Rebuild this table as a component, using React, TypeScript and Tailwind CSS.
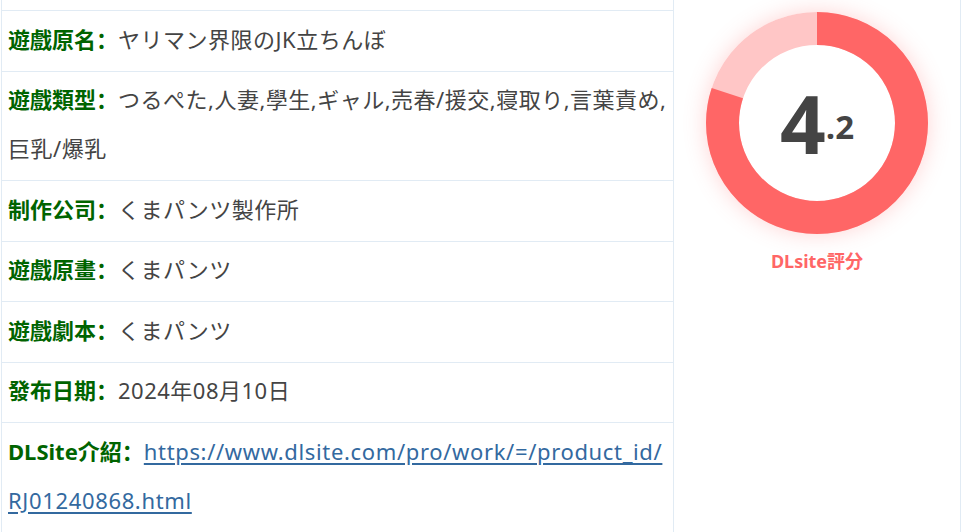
import React from 'react'

const rows: { label: string; value: React.ReactNode }[] = [
  { label: '遊戲原名', value: 'ヤリマン界限のJK立ちんぼ' },
  { label: '遊戲類型', value: 'つるぺた,人妻,學生,ギャル,売春/援交,寝取り,言葉責め,巨乳/爆乳' },
  { label: '制作公司', value: 'くまパンツ製作所' },
  { label: '遊戲原畫', value: 'くまパンツ' },
  { label: '遊戲劇本', value: 'くまパンツ' },
  { label: '發布日期', value: '2024年08月10日' },
  {
    label: 'DLSite介紹',
    value: (
      <a href="#" className="text-[#33699f] underline underline-offset-[3px] tracking-[0.65px]">
        https://www.dlsite.com/pro/work/=/product_id/<wbr />RJ01240868.html
      </a>
    ),
  },
]

function ScoreRing({ percent }: { percent: number }) {
  const r = 94.5
  const c = 2 * Math.PI * r
  return (
    <div className="relative w-[222px] h-[222px] rounded-full shadow-[0_0_22px_rgba(255,102,102,0.28)]">
      <svg width="222" height="222" viewBox="0 0 222 222" className="absolute inset-0">
        <circle cx="111" cy="111" r={r} fill="none" stroke="#ffc6c6" strokeWidth="33" />
        <circle
          cx="111"
          cy="111"
          r={r}
          fill="none"
          stroke="#ff6666"
          strokeWidth="33"
          strokeDasharray={`${c * percent} ${c}`}
          transform="rotate(-90 111 111)"
        />
      </svg>
      <div className="absolute inset-0 flex items-center justify-center font-['Open_Sans',sans-serif] text-[#444] font-bold">
        <span className="text-[80px] leading-none">4</span>
        <span className="text-[33px] leading-none self-center translate-y-[3px]">.2</span>
      </div>
    </div>
  )
}

export default function App() {
  return (
    <div className="w-[961px] h-[532px] overflow-hidden bg-white font-['Noto_Sans','Noto_Sans_CJK_JP',sans-serif]">
      <div className="ml-px flex border-b border-r border-[#e1ebf4]">
        {/* info table */}
        <div className="w-[672px] border-l border-[#e1ebf4]">
          <div className="h-[10px]" />
          {rows.map((row) => (
            <div
              key={row.label}
              className="border-t border-[#e1ebf4] px-[6px] pt-[3.5px] pb-[7px] leading-[49px] text-[22px] text-[#444]"
            >
              <span className="font-bold text-[#006400] font-['Noto_Sans','Noto_Sans_CJK_SC',sans-serif]">
                {row.label}：
              </span>
              <span className="tracking-[0.5px]">{row.value}</span>
            </div>
          ))}
        </div>

        {/* score */}
        <div className="flex-1 border-l border-[#e1ebf4] flex flex-col items-center pt-[12px]">
          <ScoreRing percent={0.8} />
          <div className="mt-[16px] text-[18px] font-bold text-[#ff6666] leading-[22px]">DLsite評分</div>
        </div>
      </div>
    </div>
  )
}
